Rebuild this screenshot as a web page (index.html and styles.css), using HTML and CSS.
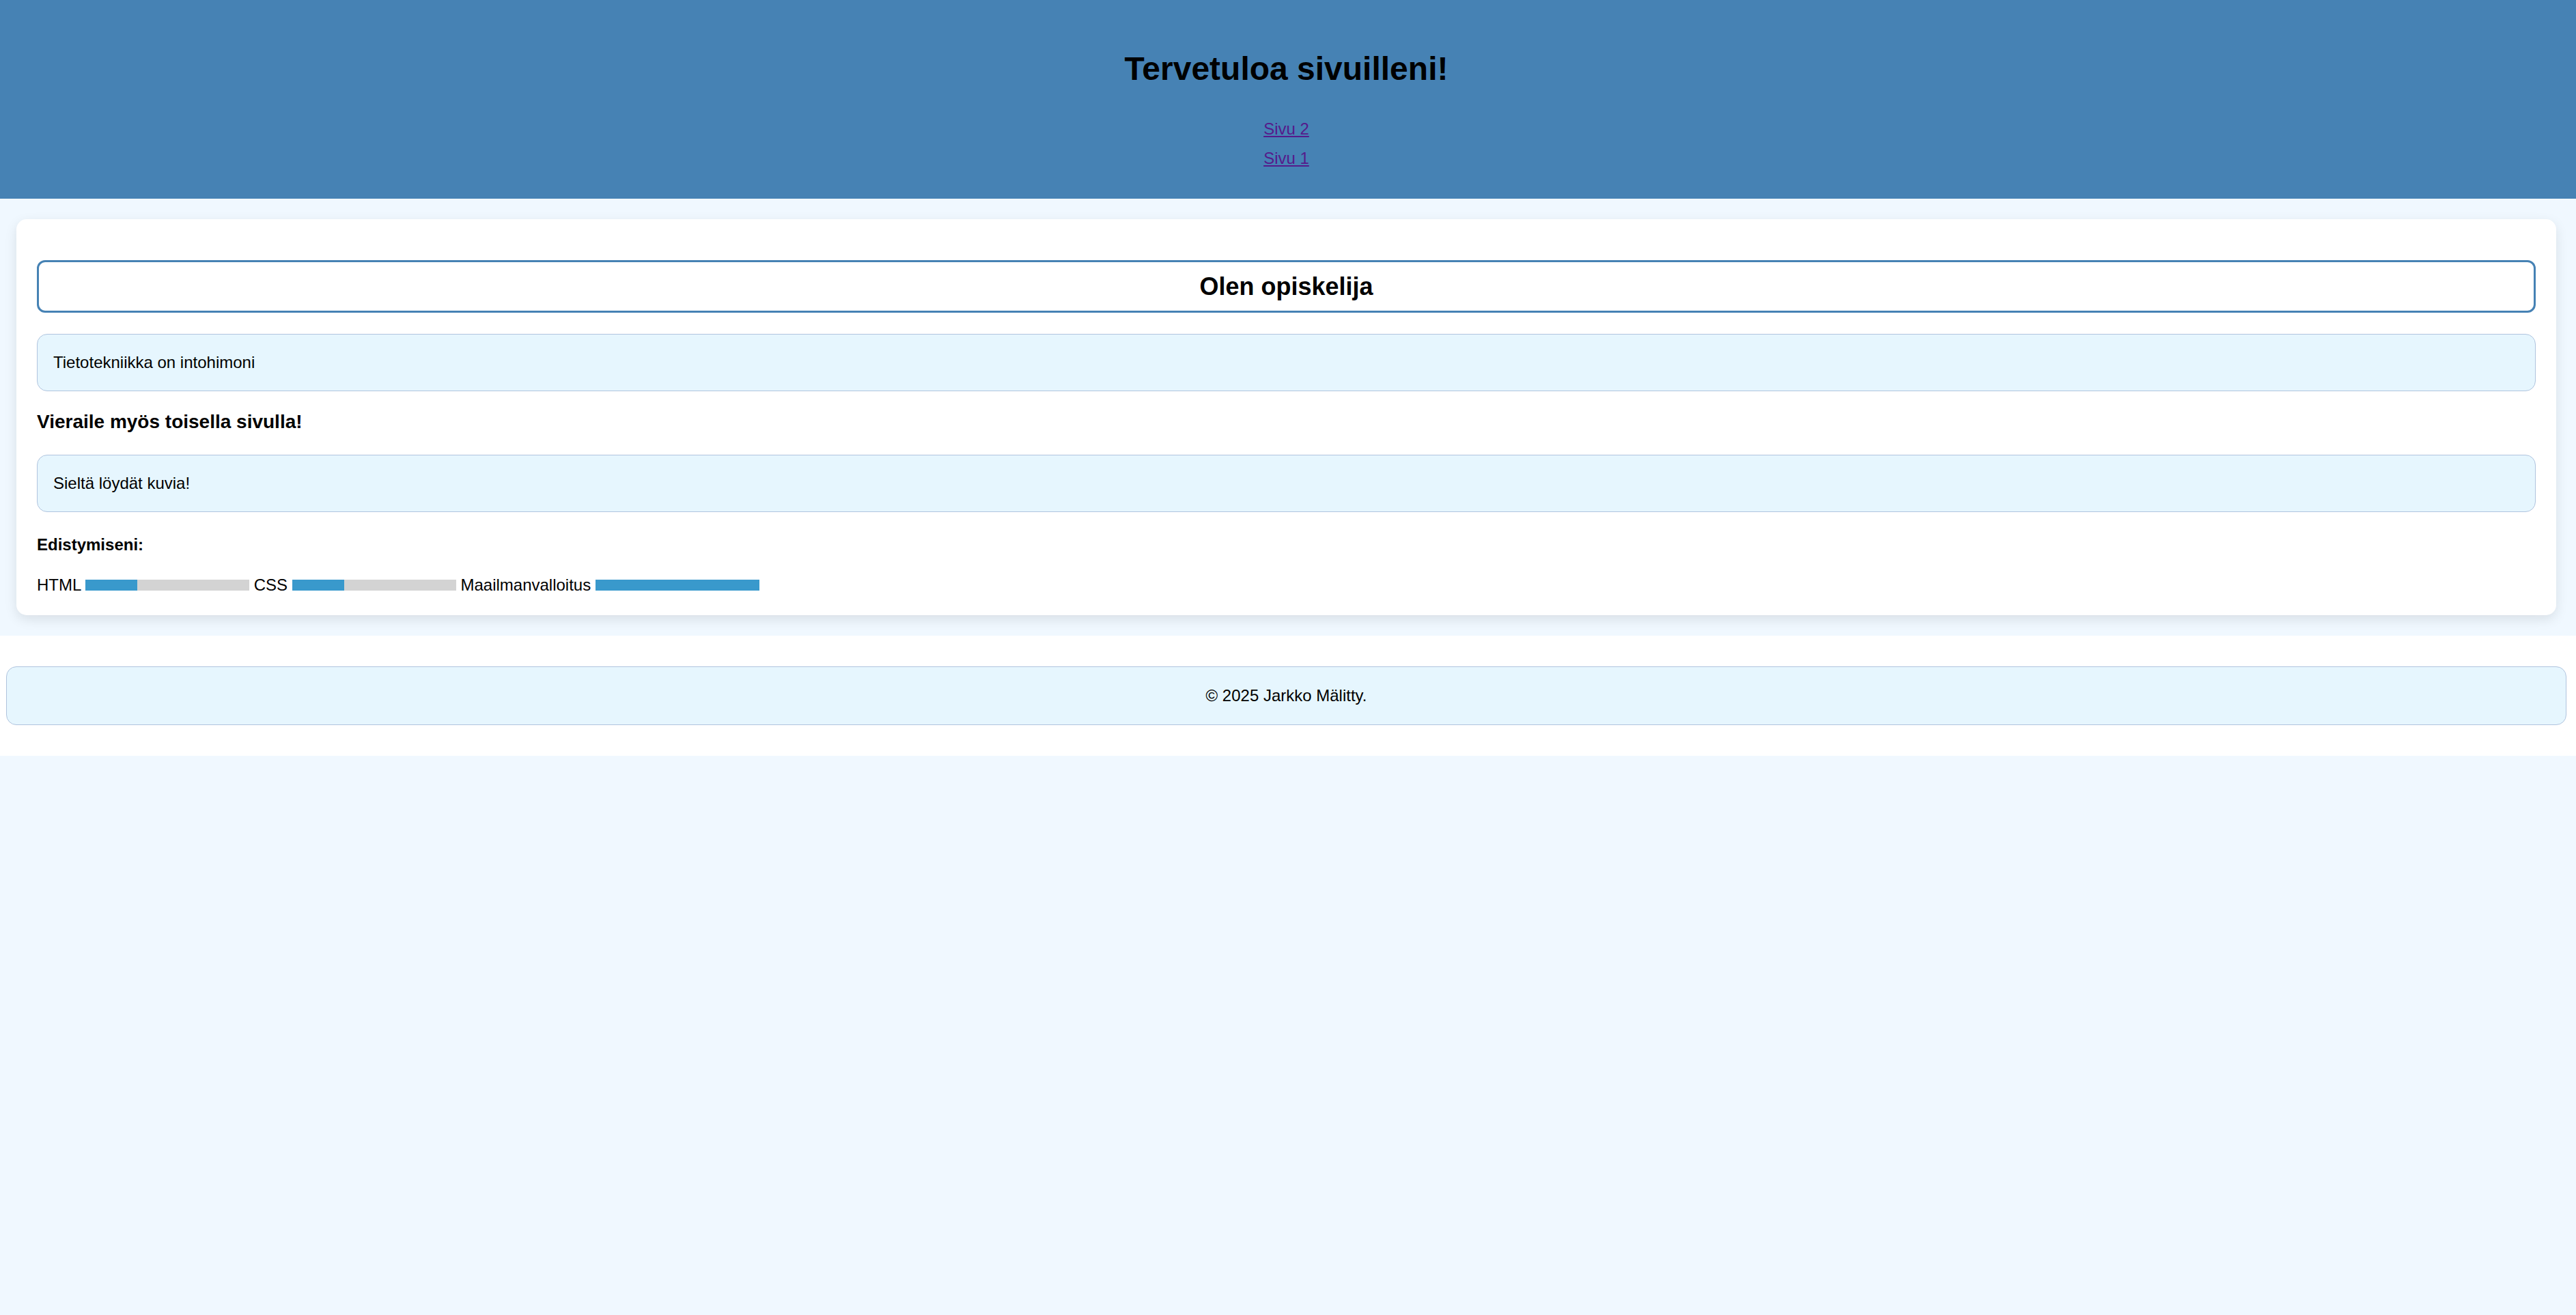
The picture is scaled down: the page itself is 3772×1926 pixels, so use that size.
FILE: index.html
```html
<!DOCTYPE html>
<html lang="fi">
<head>
<meta charset="utf-8">
<title>Tervetuloa sivuilleni!</title>
<link rel="stylesheet" href="styles.css">
</head>
<body>
<header class="site-header">
  <h1 class="site-title">Tervetuloa sivuilleni!</h1>
  <nav class="site-nav">
    <a class="nav-link" href="#sivu2">Sivu 2</a>
    <a class="nav-link" href="#sivu1">Sivu 1</a>
  </nav>
</header>
<main class="main">
  <section class="card">
    <h2 class="card-title">Olen opiskelija</h2>
    <p class="info-box first-box">Tietotekniikka on intohimoni</p>
    <h3 class="subheading">Vieraile myös toisella sivulla!</h3>
    <p class="info-box">Sieltä löydät kuvia!</p>
    <h4 class="progress-heading">Edistymiseni:</h4>
    <p class="progress-row">HTML <span class="bar"><span class="bar-fill" style="width:31.7%"></span></span> CSS <span class="bar"><span class="bar-fill" style="width:31.7%"></span></span> Maailmanvalloitus <span class="bar"><span class="bar-fill" style="width:100%"></span></span></p>
  </section>
</main>
<footer class="site-footer">
  <p class="footer-box">© 2025 Jarkko Mälitty.</p>
</footer>
</body>
</html>
```
FILE: styles.css
```css
html {
  background: #f0f8ff;
}

body {
  margin: 0;
  background: #f0f8ff;
  color: #000;
  font-family: "Liberation Sans", Arial, sans-serif;
  font-size: 24px;
  line-height: 38.4px;
}

.site-header {
  background: #4682b4;
  padding: 73px 5px 40px 0;
  text-align: center;
}

.site-title {
  margin: 0 0 41.5px;
  font-size: 48px;
  line-height: 55px;
  font-weight: bold;
}

.site-nav {
  display: flex;
  flex-direction: column;
  align-items: center;
  gap: 4.6px;
}

.nav-link {
  color: #551a8b;
  text-decoration: underline;
  line-height: 38.4px;
}

.main {
  padding: 30px 29px 30px 24px;
}

.card {
  display: flex;
  flex-direction: column;
  background: #fff;
  border-radius: 15px;
  padding: 30px 30px 25px 30px;
  box-shadow: 0 6px 18px rgba(0, 0, 0, 0.1);
}

.card-title {
  margin: 30px 0 0;
  border: 3px solid #4682b4;
  border-radius: 12px;
  padding: 15px;
  font-size: 36px;
  line-height: 41px;
  text-align: center;
  font-weight: bold;
}

.info-box {
  margin: 0;
  background: #e6f6fe;
  border: 1px solid #b0c4de;
  border-radius: 15px;
  padding: 22px 23px;
}

.first-box {
  margin-top: 31px;
}

.subheading {
  margin: 22.6px 0 25px;
  font-size: 28px;
  line-height: 44.8px;
  font-weight: bold;
}

.progress-heading {
  margin: 29px 0 20.5px;
  font-size: 24px;
  line-height: 38.4px;
  font-weight: bold;
}

.progress-row {
  margin: 0;
}

.bar {
  display: inline-block;
  width: 240px;
  height: 16px;
  background: #d3d3d3;
}

.bar-fill {
  display: block;
  height: 100%;
  background: #3999cc;
}

.site-footer {
  background: #fff;
  padding: 45px 14px 45px 9px;
}

.footer-box {
  margin: 0;
  background: #e6f6fe;
  border: 1px solid #b0c4de;
  border-radius: 15px;
  padding: 22.5px;
  text-align: center;
}
```
